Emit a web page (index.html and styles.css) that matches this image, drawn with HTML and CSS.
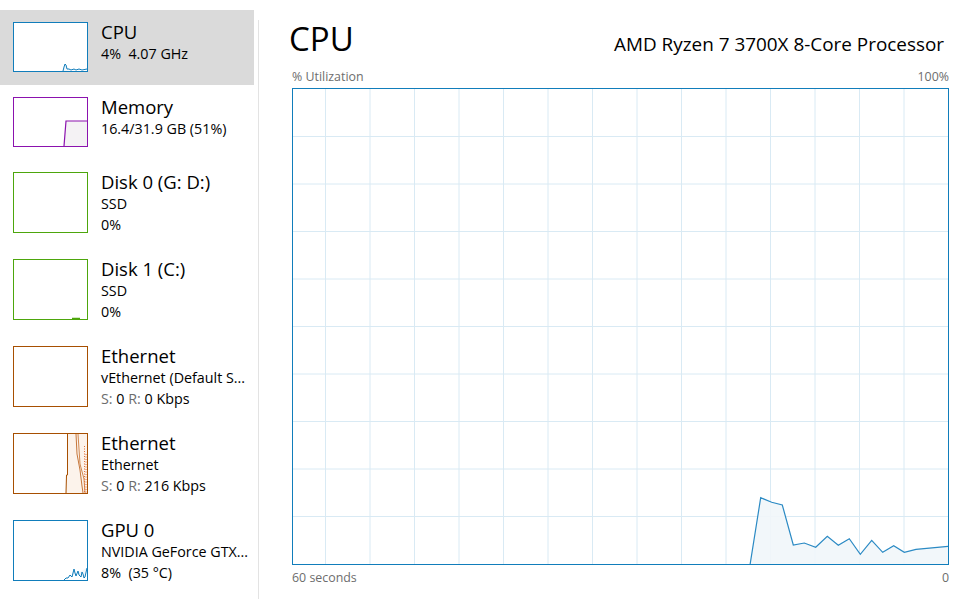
FILE: index.html
```html
<!DOCTYPE html>
<html>
<head>
<meta charset="utf-8">
<link rel="stylesheet" href="styles.css">
</head>
<body>
<div class="app">
  <nav class="sidebar">
    <div class="item item-sel short">
      <div class="thumb t-cpu">
        <svg width="73" height="48" viewBox="0 0 73 48"><polyline points="49,48 50,44 51,41 52,42 53,46 55,46 57,47 60,46 62,47 65,46 68,47 73,46" fill="#f1f6fa" stroke="#117dbb" stroke-width="1"/></svg>
      </div>
      <div class="txt">
        <div class="title">CPU</div>
        <div class="sub">4%&nbsp; 4.07 GHz</div>
      </div>
    </div>
    <div class="item short">
      <div class="thumb t-mem">
        <svg width="73" height="48" viewBox="0 0 73 48"><polygon points="50,48 52,23 73,23 73,48" fill="#f4f2f4"/><polyline points="50,48 52,23 73,23" fill="none" stroke="#8b12ae" stroke-width="1.2"/></svg>
      </div>
      <div class="txt">
        <div class="title">Memory</div>
        <div class="sub">16.4/31.9 GB (51%)</div>
      </div>
    </div>
    <div class="item">
      <div class="thumb t-disk"></div>
      <div class="txt">
        <div class="title">Disk 0 (G: D:)</div>
        <div class="sub">SSD</div>
        <div class="sub">0%</div>
      </div>
    </div>
    <div class="item">
      <div class="thumb t-disk">
        <svg width="73" height="59" viewBox="0 0 73 59"><line x1="58" y1="58.5" x2="66" y2="58.5" stroke="#4da60c" stroke-width="1.5"/></svg>
      </div>
      <div class="txt">
        <div class="title">Disk 1 (C:)</div>
        <div class="sub">SSD</div>
        <div class="sub">0%</div>
      </div>
    </div>
    <div class="item">
      <div class="thumb t-eth"></div>
      <div class="txt">
        <div class="title">Ethernet</div>
        <div class="sub">vEthernet (Default S...</div>
        <div class="sub"><span class="dim">S:</span> 0 <span class="dim">R:</span> 0 Kbps</div>
      </div>
    </div>
    <div class="item">
      <div class="thumb t-eth">
        <svg width="73" height="59" viewBox="0 0 73 59">
          <polygon points="52,59 52.5,41 53.5,41 53.5,0 73,0 73,59" fill="#fcf3eb"/>
          <polyline points="52,59 52.5,41 53.5,41 53.5,0" fill="none" stroke="#a74f01" stroke-width="1"/>
          <polyline points="62,0 63,20 66,36 68,52 69,59" fill="none" stroke="#c6763a" stroke-width="1"/>
          <polyline points="64,0 66,30 70,45 71,59" fill="none" stroke="#d08850" stroke-width="1"/>
          <line x1="70.5" y1="12" x2="70.5" y2="59" stroke="#e0703a" stroke-width="1" stroke-dasharray="1,1.5"/>
          <line x1="72" y1="20" x2="72" y2="59" stroke="#e0703a" stroke-width="1" stroke-dasharray="1,1.5"/>
        </svg>
      </div>
      <div class="txt">
        <div class="title">Ethernet</div>
        <div class="sub">Ethernet</div>
        <div class="sub"><span class="dim">S:</span> 0 <span class="dim">R:</span> 216 Kbps</div>
      </div>
    </div>
    <div class="item">
      <div class="thumb t-gpu">
        <svg width="73" height="59" viewBox="0 0 73 59"><polyline points="50,59 52,57 54,57 56,54 58,56 60,48 61,52 62,55 64,50 65,54 67,56 68,51 69,53 70,57 71,56 73,47" fill="#f1f6fa" stroke="#117dbb" stroke-width="1"/></svg>
      </div>
      <div class="txt">
        <div class="title">GPU 0</div>
        <div class="sub">NVIDIA GeForce GTX...</div>
        <div class="sub">8%&nbsp; (35 °C)</div>
      </div>
    </div>
  </nav>
  <div class="sep"></div>
  <main class="main">
    <header class="head">
      <h1 class="big">CPU</h1>
      <div class="model">AMD Ryzen 7 3700X 8-Core Processor</div>
    </header>
    <div class="labels top"><span>% Utilization</span><span>100%</span></div>
    <div class="graph">
      <svg width="655" height="475" viewBox="0 0 655 475">
        <g stroke="#d9eaf4" stroke-width="1">
          <line x1="0" y1="47.5" x2="655" y2="47.5"/>
          <line x1="0" y1="95" x2="655" y2="95"/>
          <line x1="0" y1="142.5" x2="655" y2="142.5"/>
          <line x1="0" y1="190" x2="655" y2="190"/>
          <line x1="0" y1="237.5" x2="655" y2="237.5"/>
          <line x1="0" y1="285" x2="655" y2="285"/>
          <line x1="0" y1="332.5" x2="655" y2="332.5"/>
          <line x1="0" y1="380" x2="655" y2="380"/>
          <line x1="0" y1="427.5" x2="655" y2="427.5"/>
          <line x1="32.5" y1="0" x2="32.5" y2="475"/>
          <line x1="77" y1="0" x2="77" y2="475"/>
          <line x1="121.5" y1="0" x2="121.5" y2="475"/>
          <line x1="166" y1="0" x2="166" y2="475"/>
          <line x1="210.5" y1="0" x2="210.5" y2="475"/>
          <line x1="255" y1="0" x2="255" y2="475"/>
          <line x1="299.5" y1="0" x2="299.5" y2="475"/>
          <line x1="344" y1="0" x2="344" y2="475"/>
          <line x1="388.5" y1="0" x2="388.5" y2="475"/>
          <line x1="433" y1="0" x2="433" y2="475"/>
          <line x1="477.5" y1="0" x2="477.5" y2="475"/>
          <line x1="522" y1="0" x2="522" y2="475"/>
          <line x1="566.5" y1="0" x2="566.5" y2="475"/>
          <line x1="611" y1="0" x2="611" y2="475"/>
        </g>
        <polygon points="457,476 467.7,408.7 478.7,413.3 489.3,416 500.3,456 511.3,454 522.7,458.3 534.3,447.3 545.3,456.3 556.3,449.7 567.3,465.3 578.7,451.3 589.7,463.3 600.7,456.7 611.3,463.3 623,460.3 656,457.3 656,476" fill="#f1f6fa" fill-opacity="0.9"/>
        <polyline points="457,476 467.7,408.7 478.7,413.3 489.3,416 500.3,456 511.3,454 522.7,458.3 534.3,447.3 545.3,456.3 556.3,449.7 567.3,465.3 578.7,451.3 589.7,463.3 600.7,456.7 611.3,463.3 623,460.3 656,457.3" fill="none" stroke="#2b8ac4" stroke-width="1.2"/>
      </svg>
    </div>
    <div class="labels bottom"><span>60 seconds</span><span>0</span></div>
  </main>
</div>
</body>
</html>
```

FILE: styles.css
```css
* { box-sizing: border-box; }
html, body {
  margin: 0;
  padding: 0;
  background: #ffffff;
  font-family: "Open Sans", "Noto Sans", sans-serif;
  color: #000;
}
.app {
  display: flex;
  width: 976px;
  height: 599px;
  overflow: hidden;
}
.sidebar {
  width: 254px;
  padding-top: 10px;
  flex: none;
}
.item {
  display: flex;
  align-items: flex-start;
  height: 87px;
  padding: 12px 0 0 13px;
  gap: 13px;
}
.item.short { height: 75px; }
.item-sel { background: #dadada; }
.thumb {
  width: 75px;
  height: 61px;
  border: 1px solid #4da60c;
  background: #fff;
  flex: none;
  line-height: 0;
}
.thumb svg { display: block; }
.short .thumb { height: 50px; }
.t-cpu, .t-gpu { border-color: #117dbb; }
.t-mem { border-color: #8b12ae; }
.t-disk { border-color: #4da60c; }
.t-eth { border-color: #a74f01; }
.txt {
  margin-top: -2px;
  white-space: nowrap;
}
.title {
  font-size: 18.5px;
  line-height: 23px;
}
.sub {
  font-size: 14.3px;
  line-height: 21px;
}
.dim { color: #6d6d6d; }
.sep {
  width: 1px;
  margin: 20px 0 0 4px;
  background: #e3e3e3;
  flex: none;
}
.main {
  flex: 1;
  padding: 0 27px 0 33px;
}
.head {
  display: flex;
  justify-content: space-between;
  align-items: baseline;
  height: 69px;
  padding-top: 17px;
}
.big {
  margin: 0 0 0 -3px;
  font-size: 33px;
  font-weight: 400;
  line-height: 44px;
}
.model {
  font-size: 18.9px;
  margin-right: 5px;
}
.labels {
  display: flex;
  justify-content: space-between;
  font-size: 12.4px;
  color: #6d6d6d;
}
.labels.top {
  height: 19px;
  line-height: 16px;
}
.labels.bottom {
  margin-top: 5px;
  line-height: 16px;
}
.graph {
  width: 657px;
  height: 477px;
  border: 1px solid #117dbb;
  line-height: 0;
}
.graph svg { display: block; }
```
